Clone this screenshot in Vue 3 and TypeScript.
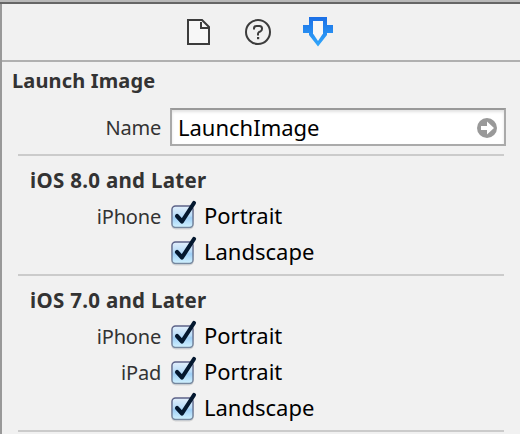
<script setup lang="ts">
interface Option {
  device: string
  label: string
}
interface Section {
  title: string
  options: Option[]
}

const sections: Section[] = [
  {
    title: 'iOS 8.0 and Later',
    options: [
      { device: 'iPhone', label: 'Portrait' },
      { device: '', label: 'Landscape' },
    ],
  },
  {
    title: 'iOS 7.0 and Later',
    options: [
      { device: 'iPhone', label: 'Portrait' },
      { device: 'iPad', label: 'Portrait' },
      { device: '', label: 'Landscape' },
    ],
  },
]
</script>

<template>
  <div class="window">
    <div class="edge"></div>
    <div class="inspector">
      <nav class="tabs">
        <svg class="tab" width="32" height="32" viewBox="0 0 32 32">
          <path d="M6 4H20L27 11V28H6Z" fill="#f7f7f7" stroke="#3c3c3c" stroke-width="2" />
          <path d="M19 6V12H26" fill="none" stroke="#3c3c3c" stroke-width="2" />
        </svg>
        <svg class="tab" width="32" height="32" viewBox="0 0 32 32">
          <circle cx="16" cy="16" r="12" fill="none" stroke="#3c3c3c" stroke-width="2" />
          <path d="M12 13.5V12.5Q12 10 14.5 10H17.5Q20 10 20 12.5V13Q20 14.5 18.5 15.3L17 16Q16 16.6 16 18V19.5" fill="none" stroke="#3c3c3c" stroke-width="2" />
          <rect x="15" y="21" width="2.2" height="2.2" fill="#3c3c3c" />
        </svg>
        <svg class="tab" width="32" height="32" viewBox="0 0 32 32">
          <defs>
            <linearGradient id="blue" x1="0" y1="0" x2="0" y2="1">
              <stop offset="0" stop-color="#1b6fe6" />
              <stop offset="1" stop-color="#32a8fb" />
            </linearGradient>
          </defs>
          <path d="M7 1H25V9H31V17H25V19L16 30.5L7 19V17H1V9H7Z" fill="url(#blue)" />
          <path d="M11 5V17.5L16 25L21 17.5V5Z" fill="#f7f7f7" />
        </svg>
      </nav>

      <h1 class="heading">Launch Image</h1>

      <div class="name-row">
        <span class="caption">Name</span>
        <div class="field">
          <span class="value">LaunchImage</span>
          <svg class="go" width="20" height="20" viewBox="0 0 20 20">
            <circle cx="10" cy="10" r="10" fill="#999" />
            <path d="M4 8H10V3.5L17 10L10 16.5V12H4Z" fill="#fff" />
          </svg>
        </div>
      </div>

      <section v-for="section in sections" :key="section.title" class="section">
        <h2 class="title">{{ section.title }}</h2>
        <div v-for="(option, i) in section.options" :key="i" class="option">
          <span class="caption">{{ option.device }}</span>
          <svg class="check" width="28" height="32" viewBox="0 0 28 32">
            <defs>
              <linearGradient id="box" x1="0" y1="0" x2="0" y2="1">
                <stop offset="0" stop-color="#e2effb" />
                <stop offset=".45" stop-color="#b9dcf8" />
                <stop offset=".55" stop-color="#9fcff6" />
                <stop offset="1" stop-color="#d3f3ff" />
              </linearGradient>
              <linearGradient id="rim" x1="0" y1="0" x2="0" y2="1">
                <stop offset="0" stop-color="#5c6288" />
                <stop offset="1" stop-color="#76889f" />
              </linearGradient>
            </defs>
            <rect x="1.5" y="6.5" width="22" height="22.5" rx="4" fill="none" stroke="#000" stroke-opacity=".12" />
            <rect x="2" y="6" width="21" height="21.5" rx="3.5" fill="url(#box)" stroke="url(#rim)" stroke-width="1.4" />
            <path d="M7 16L12 21.5L24 3" fill="none" stroke="#04182f" stroke-width="4.1" stroke-linecap="round" stroke-linejoin="round" />
          </svg>
          <span class="label">{{ option.label }}</span>
        </div>
      </section>
      <div class="rule"></div>
    </div>
  </div>
</template>

<style>
body {
  margin: 0;
  background: #f1f1f1;
}
</style>

<style scoped>
.window {
  box-sizing: border-box;
  width: 520px;
  height: 434px;
  overflow: hidden;
  background: #f1f1f1;
  color: #333;
  font-family: "Noto Sans", "Open Sans", sans-serif;
}
.edge {
  height: 2px;
  background: #b9b9b9;
  border-bottom: 2px solid #666;
}
.inspector {
  height: 430px;
  border-left: 2px solid #999;
}
.tabs {
  display: flex;
  justify-content: center;
  gap: 28px;
  box-sizing: border-box;
  height: 58px;
  padding: 12px 6px 0 0;
  border-bottom: 2px solid #b0b0b0;
}
.tab {
  display: block;
}
.heading,
.title {
  margin: 0;
  font-weight: 700;
  white-space: nowrap;
}
.heading {
  height: 46px;
  padding-left: 10px;
  font-size: 20px;
  letter-spacing: 0.15px;
  line-height: 37px;
}
.name-row {
  display: flex;
  align-items: center;
  height: 38px;
  margin-bottom: 8px;
}
.caption {
  width: 159px;
  margin-right: 9px;
  padding-top: 2px;
  font-size: 20px;
  letter-spacing: -0.2px;
  line-height: 36px;
  text-align: right;
}
.field {
  display: flex;
  align-items: center;
  justify-content: space-between;
  box-sizing: border-box;
  width: 336px;
  height: 38px;
  padding: 0 7px 0 6px;
  background: #fff;
  border: 2px solid #aaa;
  border-top-color: #999;
  box-shadow: inset 0 2px 3px #e2e2e2;
}
.value,
.label {
  color: #000;
  font-size: 22px;
  line-height: 34px;
}
.label {
  padding-bottom: 2px;
  margin-left: 6px;
}
.go {
  margin-top: 2px;
}
.section {
  margin: 0 16px;
  padding-bottom: 4px;
  border-top: 2px solid #cbcbcb;
}
.title {
  height: 42px;
  padding-left: 12px;
  font-size: 20.5px;
  letter-spacing: 0.3px;
  line-height: 48px;
}
.option {
  display: flex;
  align-items: center;
  height: 36px;
}
.option .caption {
  width: 143px;
}
.rule {
  height: 2px;
  margin: 0 16px;
  background: #cbcbcb;
}
</style>
